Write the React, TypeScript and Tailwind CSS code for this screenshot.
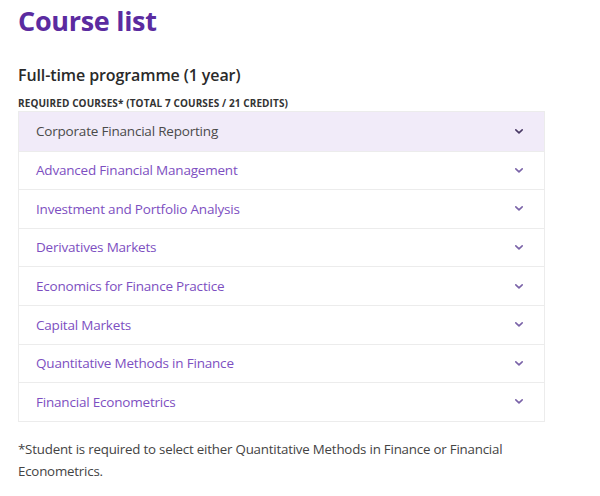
import React from "react";

const courses = [
  "Corporate Financial Reporting",
  "Advanced Financial Management",
  "Investment and Portfolio Analysis",
  "Derivatives Markets",
  "Economics for Finance Practice",
  "Capital Markets",
  "Quantitative Methods in Finance",
  "Financial Econometrics",
];

function Chevron({ color }: { color: string }) {
  return (
    <svg width="10" height="7" viewBox="0 0 10 7" fill="none">
      <path d="M1.8 1.8 L5 4.8 L8.2 1.8" stroke={color} strokeWidth="1.6" strokeLinecap="round" strokeLinejoin="round" />
    </svg>
  );
}

export default function App() {
  return (
    <div className="w-[600px] h-[496px] bg-white font-['Open_Sans',sans-serif] overflow-hidden">
      <div className="pl-[18px] pr-[55px] pt-[2px]">
        <h1 className="text-[27px] leading-[38px] font-bold text-[#5b2ba0] tracking-[-0.3px]">Course list</h1>
        <h2 className="mt-[25px] text-[16px] leading-[20px] font-semibold text-[#2a2a2a] tracking-[-0.1px]">
          Full-time programme (1 year)
        </h2>
        <div className="mt-[12px] text-[10px] leading-[12px] font-bold text-[#333] uppercase tracking-[0.1px]">
          Required courses* (total 7 courses / 21 credits)
        </div>
        <div className="mt-[2px] border border-[#ececec]">
          {courses.map((c, i) => (
            <div
              key={c}
              className={`flex items-center justify-between h-[38.6px] pl-[17px] pr-[20px] ${
                i > 0 ? "border-t border-[#ececec]" : ""
              } ${i === 0 ? "bg-[#f1ebf9]" : "bg-white"}`}
            >
              <span
                className={`text-[13.5px] tracking-[-0.2px] ${i === 0 ? "text-[#4a4a4a]" : "text-[#7d4fc1]"}`}
              >
                {c}
              </span>
              <Chevron color={i === 0 ? "#4a3a66" : "#7a63a8"} />
            </div>
          ))}
        </div>
        <p className="mt-[16px] text-[13.3px] leading-[22px] text-[#444] tracking-[-0.2px] pr-[20px]">
          *Student is required to select either Quantitative Methods in Finance or Financial Econometrics.
        </p>
      </div>
    </div>
  );
}
